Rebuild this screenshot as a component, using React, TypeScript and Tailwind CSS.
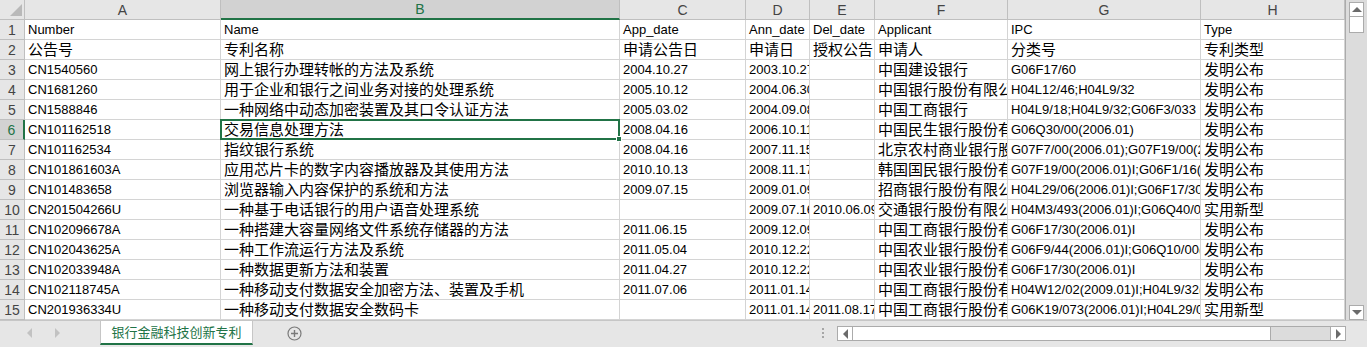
import React from 'react'

const COLS = ['A', 'B', 'C', 'D', 'E', 'F', 'G', 'H']

const ROWS: string[][] = [
  ['Number', 'Name', 'App_date', 'Ann_date', 'Del_date', 'Applicant', 'IPC', 'Type'],
  ['公告号', '专利名称', '申请公告日', '申请日', '授权公告日', '申请人', '分类号', '专利类型'],
  ['CN1540560', '网上银行办理转帐的方法及系统', '2004.10.27', '2003.10.27', '', '中国建设银行', 'G06F17/60', '发明公布'],
  ['CN1681260', '用于企业和银行之间业务对接的处理系统', '2005.10.12', '2004.06.30', '', '中国银行股份有限公司', 'H04L12/46;H04L9/32', '发明公布'],
  ['CN1588846', '一种网络中动态加密装置及其口令认证方法', '2005.03.02', '2004.09.08', '', '中国工商银行', 'H04L9/18;H04L9/32;G06F3/033', '发明公布'],
  ['CN101162518', '交易信息处理方法', '2008.04.16', '2006.10.11', '', '中国民生银行股份有限公司', 'G06Q30/00(2006.01)', '发明公布'],
  ['CN101162534', '指纹银行系统', '2008.04.16', '2007.11.15', '', '北京农村商业银行股份有限公司', 'G07F7/00(2006.01);G07F19/00(2006.01)', '发明公布'],
  ['CN101861603A', '应用芯片卡的数字内容播放器及其使用方法', '2010.10.13', '2008.11.17', '', '韩国国民银行股份有限公司', 'G07F19/00(2006.01)I;G06F1/16(2006.01)I', '发明公布'],
  ['CN101483658', '浏览器输入内容保护的系统和方法', '2009.07.15', '2009.01.09', '', '招商银行股份有限公司', 'H04L29/06(2006.01)I;G06F17/30(2006.01)I', '发明公布'],
  ['CN201504266U', '一种基于电话银行的用户语音处理系统', '', '2009.07.16', '2010.06.09', '交通银行股份有限公司', 'H04M3/493(2006.01)I;G06Q40/00(2006.01)I', '实用新型'],
  ['CN102096678A', '一种搭建大容量网络文件系统存储器的方法', '2011.06.15', '2009.12.09', '', '中国工商银行股份有限公司', 'G06F17/30(2006.01)I', '发明公布'],
  ['CN102043625A', '一种工作流运行方法及系统', '2011.05.04', '2010.12.22', '', '中国农业银行股份有限公司', 'G06F9/44(2006.01)I;G06Q10/00(2006.01)I', '发明公布'],
  ['CN102033948A', '一种数据更新方法和装置', '2011.04.27', '2010.12.22', '', '中国农业银行股份有限公司', 'G06F17/30(2006.01)I', '发明公布'],
  ['CN102118745A', '一种移动支付数据安全加密方法、装置及手机', '2011.07.06', '2011.01.14', '', '中国工商银行股份有限公司', 'H04W12/02(2009.01)I;H04L9/32(2006.01)I', '发明公布'],
  ['CN201936334U', '一种移动支付数据安全数码卡', '', '2011.01.14', '2011.08.17', '中国工商银行股份有限公司', 'G06K19/073(2006.01)I;H04L29/06(2006.01)I', '实用新型'],
]

// active cell is B6
const SEL_ROW = 5
const SEL_COL = 1

const isCjk = (s: string) => /[\u3000-\u9fff]/.test(s)

function Cell({ text, selected }: { text: string; selected: boolean }) {
  return (
    <div className="relative border-r border-b border-[#d4d4d4]">
      <div
        className={
          'h-full overflow-hidden whitespace-nowrap pl-[3px] text-black ' +
          (isCjk(text) ? 'text-[15px] leading-[19px]' : 'text-[13px] leading-[20px]')
        }
      >
        {text}
      </div>
      {selected && (
        <>
          <div className="absolute -left-[1px] -top-[1px] -right-[1px] -bottom-[1px] z-10 border-2 border-[#217346]" />
          <div className="absolute -right-[3px] -bottom-[3px] z-20 h-[6px] w-[6px] border border-white bg-[#217346]" />
        </>
      )}
    </div>
  )
}

function Tri({ dir, className }: { dir: 'up' | 'down' | 'left' | 'right'; className: string }) {
  const pts = {
    up: '0,5 5,0 10,5',
    down: '0,0 10,0 5,5',
    left: '5,0 5,10 0,5',
    right: '0,0 0,10 5,5',
  }[dir]
  const vertical = dir === 'up' || dir === 'down'
  return (
    <svg width={vertical ? 10 : 5} height={vertical ? 5 : 10} viewBox={vertical ? '0 0 10 5' : '0 0 5 10'} className={className}>
      <polygon points={pts} fill="currentColor" />
    </svg>
  )
}

export default function App() {
  return (
    <div className="flex h-[347px] w-[1367px] flex-col overflow-hidden bg-white [font-family:'Liberation_Sans','Noto_Sans_CJK_SC',sans-serif]">
      <div className="flex h-[320px]">
        {/* sheet grid */}
        <div className="grid w-[1346px] grid-cols-[25px_196px_399px_126px_64px_65px_133px_193px_144px] auto-rows-[20px] border-r border-[#ababab]">
          {/* corner */}
          <div className="relative border-r border-b border-[#bfbfbf] bg-[#e6e6e6]">
            <svg width="12" height="12" viewBox="0 0 12 12" className="absolute right-[2px] bottom-[3px]">
              <polygon points="12,0 12,12 0,12" fill="#b9b9b9" />
            </svg>
          </div>
          {COLS.map((c, i) => (
            <div
              key={c}
              className={
                'flex items-center justify-center border-r pt-[1px] text-[14px] ' +
                (i === SEL_COL
                  ? 'border-b-2 border-r-[#bfbfbf] border-b-[#217346] bg-[#d2d2d2] text-[#217346]'
                  : 'border-b border-[#bfbfbf] bg-[#e6e6e6] text-[#444]')
              }
            >
              {c}
            </div>
          ))}
          {ROWS.map((row, r) => (
            <React.Fragment key={r}>
              <div
                className={
                  'flex items-center justify-center border-b pt-[1px] text-[14px] ' +
                  (r === SEL_ROW
                    ? 'border-r-2 border-b-[#bfbfbf] border-r-[#217346] bg-[#d2d2d2] text-[#217346]'
                    : 'border-r border-[#bfbfbf] bg-[#e6e6e6] text-[#444]')
                }
              >
                {r + 1}
              </div>
              {row.map((v, c) => (
                <Cell key={c} text={v} selected={r === SEL_ROW && c === SEL_COL} />
              ))}
            </React.Fragment>
          ))}
        </div>

        {/* vertical scrollbar */}
        <div className="flex w-[21px] flex-col bg-[#dcdcdc] pt-[2px] pl-[3px] pr-[3px]">
          <div className="flex h-[15px] items-center justify-center border border-[#ababab] bg-white">
            <Tri dir="up" className="text-[#6b6b6b]" />
          </div>
          <div className="h-[16px] border border-t-0 border-[#ababab] bg-white" />
          <div className="flex-1" />
          <div className="flex h-[15px] items-center justify-center border border-[#ababab] bg-white">
            <Tri dir="down" className="text-[#6b6b6b]" />
          </div>
        </div>
      </div>

      {/* sheet tabs + horizontal scrollbar */}
      <div className="flex h-[27px] items-start border-t border-[#c6c6c6] bg-[#e6e6e6]">
        <div className="flex h-[24px] w-[100px] items-center gap-[23px] pl-[27px]">
          <Tri dir="left" className="text-[#c2c2c2]" />
          <Tri dir="right" className="text-[#c2c2c2]" />
        </div>
        <div className="flex h-[24px] w-[153px] items-center justify-center border-x border-b-2 border-x-[#c6c6c6] border-b-[#217346] bg-white pt-[1px] text-[13px] text-[#217346]">
          银行金融科技创新专利
        </div>
        <div className="ml-[34px] flex h-[24px] items-center">
          <svg width="15" height="15" viewBox="0 0 15 15">
            <circle cx="7.5" cy="7.5" r="6.5" fill="none" stroke="#7a7a7a" strokeWidth="1.2" />
            <path d="M7.5 4v7M4 7.5h7" stroke="#7a7a7a" strokeWidth="1.4" />
          </svg>
        </div>
        <div className="ml-auto mr-[13px] flex h-[24px] flex-col items-center justify-center gap-[2px]">
          <div className="h-[2px] w-[2px] bg-[#a6a6a6]" />
          <div className="h-[2px] w-[2px] bg-[#a6a6a6]" />
          <div className="h-[2px] w-[2px] bg-[#a6a6a6]" />
        </div>
        <div className="mt-[5px] mr-[21px] flex h-[15px] w-[509px] border border-[#ababab] bg-[#dcdcdc]">
          <div className="flex w-[15px] items-center justify-center border-r border-[#ababab] bg-white">
            <Tri dir="left" className="text-[#6b6b6b]" />
          </div>
          <div className="w-[418px] border-r border-[#ababab] bg-white" />
          <div className="flex-1" />
          <div className="flex w-[15px] items-center justify-center border-l border-[#ababab] bg-white">
            <Tri dir="right" className="text-[#6b6b6b]" />
          </div>
        </div>
      </div>
    </div>
  )
}
